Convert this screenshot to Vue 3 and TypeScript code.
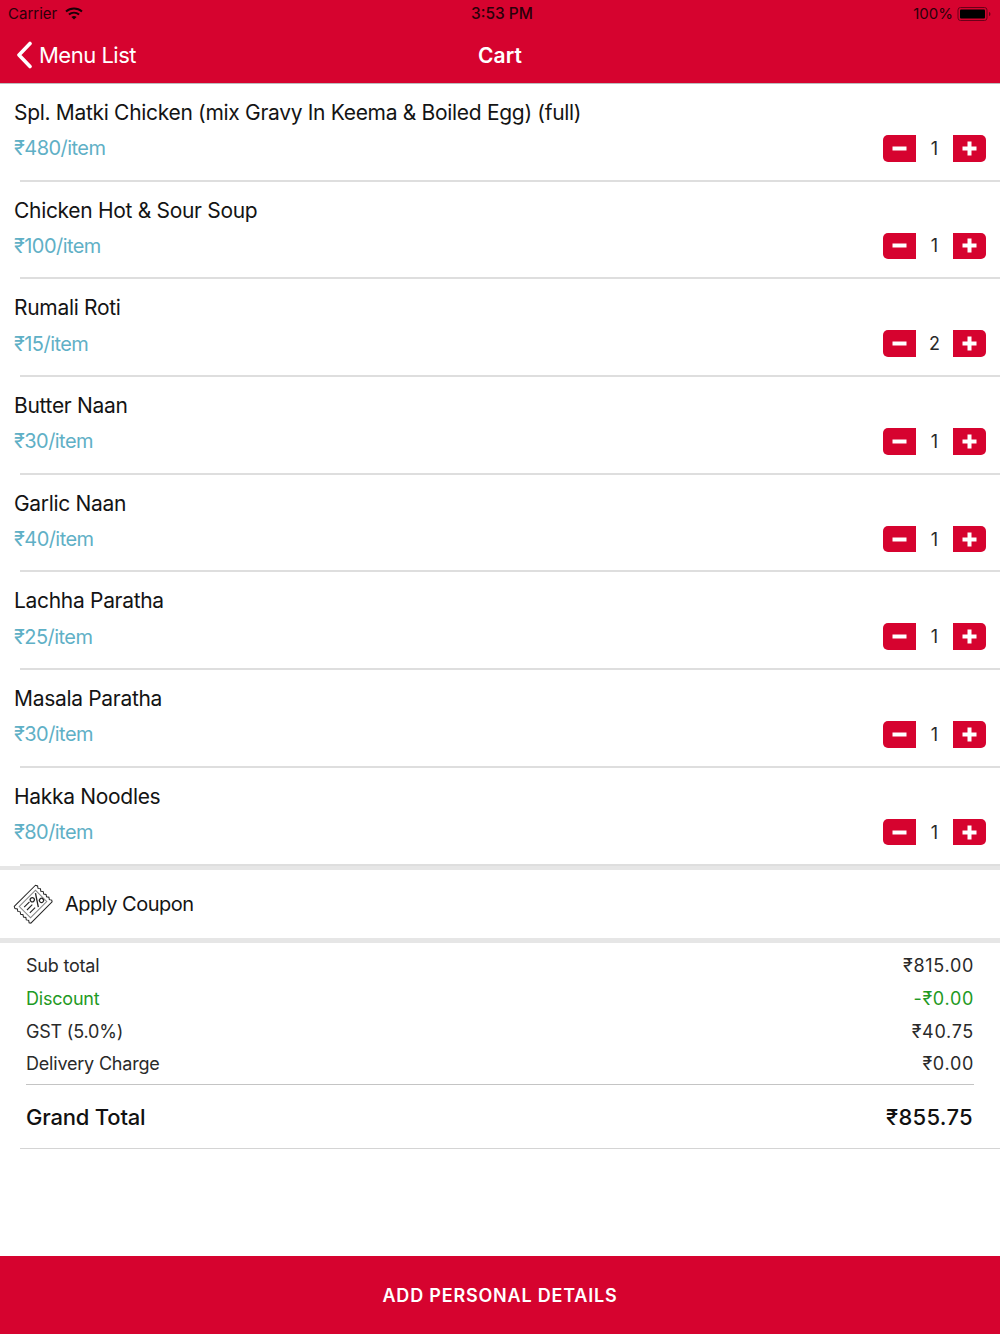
<script setup lang="ts">
interface Item { name: string; price: number; qty: number }
const items: Item[] = [
  { name: 'Spl. Matki Chicken (mix Gravy In Keema & Boiled Egg) (full)', price: 480, qty: 1 },
  { name: 'Chicken Hot & Sour Soup', price: 100, qty: 1 },
  { name: 'Rumali Roti', price: 15, qty: 2 },
  { name: 'Butter Naan', price: 30, qty: 1 },
  { name: 'Garlic Naan', price: 40, qty: 1 },
  { name: 'Lachha Paratha', price: 25, qty: 1 },
  { name: 'Masala Paratha', price: 30, qty: 1 },
  { name: 'Hakka Noodles', price: 80, qty: 1 },
]
const totals = [
  { label: 'Sub total', value: '₹815.00', green: false },
  { label: 'Discount', value: '-₹0.00', green: true },
  { label: 'GST (5.0%)', value: '₹40.75', green: false },
  { label: 'Delivery Charge', value: '₹0.00', green: false },
]
</script>

<template>
  <div class="page">
    <header class="header">
      <div class="status">
        <div class="status-left">
          <span>Carrier</span>
          <svg width="18" height="13" viewBox="0 0 18 13" class="wifi">
            <path d="M1 4.600C5.600 .6 12.400 .6 17 4.600" fill="none" stroke="#1a0006" stroke-width="2" />
            <path d="M3.900 7.600C6.900 5 11.100 5 14.100 7.600" fill="none" stroke="#1a0006" stroke-width="2" />
            <path d="M6.400 9.900C8 8.600 10 8.600 11.600 9.900L9 12.600Z" fill="#1a0006" />
          </svg>
        </div>
        <span class="clock">3:53 PM</span>
        <div class="status-right">
          <span>100%</span>
          <svg width="36" height="16" viewBox="0 0 36 16" class="battery">
            <rect x="1" y="1.500" width="29" height="13" rx="2.500" fill="none" stroke="#6b0018" stroke-width="1" />
            <rect x="3" y="3.500" width="25" height="9" rx="1" fill="#000" />
            <path d="M32 6v4c1 0 1.400-1 1.400-2s-.4-2-1.400-2z" fill="#6b0018" />
          </svg>
        </div>
      </div>
      <div class="nav">
        <div class="back">
          <svg width="18" height="28" viewBox="0 0 18 28">
            <path d="M15 2.500 4 14l11 11.500" fill="none" stroke="#fff" stroke-width="3.600" stroke-linecap="round" stroke-linejoin="round" />
          </svg>
          <span>Menu List</span>
        </div>
        <div class="title">Cart</div>
      </div>
    </header>

    <section class="list">
      <div v-for="item in items" :key="item.name" class="row">
        <div class="row-body">
          <div class="name">{{ item.name }}</div>
          <div class="row-bottom">
            <span class="price">₹{{ item.price }}/item</span>
            <div class="stepper">
              <button class="step minus"><svg width="15" height="15" viewBox="0 0 15 15"><rect x="0.500" y="5.500" width="14" height="4" fill="#fff" /></svg></button>
              <span class="qty">{{ item.qty }}</span>
              <button class="step plus"><svg width="15" height="15" viewBox="0 0 15 15"><path d="M5.500.5h4v5h5v4h-5v5h-4v-5h-5v-4h5z" fill="#fff" /></svg></button>
            </div>
          </div>
        </div>
        <div class="divider"></div>
      </div>
    </section>

    <section class="coupon">
      <svg width="40" height="40" viewBox="0 0 40 40" class="coupon-icon">
        <g transform="rotate(-45 20 20)" fill="none" stroke="#222" stroke-width="1">
          <path d="M5 8.500H35l1 2-1.400 2 1.400 2-1.400 2 1.400 2-1.400 2 1.400 2-1.400 2 1.400 2-1.400 2 1.400 2-1 1.500H5l-1-1.500 1.400-2-1.400-2 1.400-2-1.400-2 1.400-2-1.400-2 1.400-2-1.400-2 1.400-2-1.400-2z" />
          <path d="M8.500 12h23v16h-23z" stroke-opacity="0.55" />
          <path d="M11.500 16h7.500M11.500 20h7.500M11.500 24h7.500" stroke-width="1.100" />
          <path d="M21.500 26l8-12" stroke-width="1.300" />
          <circle cx="22.500" cy="16.500" r="2.100" stroke-width="1.200" />
          <circle cx="28.500" cy="23.500" r="2.100" stroke-width="1.200" />
        </g>
      </svg>
      <span>Apply Coupon</span>
    </section>

    <section class="summary">
      <div class="lines">
        <div v-for="t in totals" :key="t.label" class="line" :class="{ green: t.green }">
          <span>{{ t.label }}</span>
          <span class="amount">{{ t.value }}</span>
        </div>
      </div>
      <div class="grand">
        <span>Grand Total</span>
        <span class="grand-amount">₹855.75</span>
      </div>
    </section>

    <footer class="cta">ADD PERSONAL DETAILS</footer>
  </div>
</template>

<style>
html, body { margin: 0; background: #fff; }
</style>

<style scoped>
.page {
  width: 1000px;
  height: 1334px;
  display: flex;
  flex-direction: column;
  background: #fff;
  font-family: Inter, "Noto Sans", sans-serif;
  color: #1b1b1b;
  overflow: hidden;
}
.header {
  height: 83px;
  background: #d6032f;
  border-bottom: 1px solid #bdbdbd;
  flex: none;
}
.status {
  height: 27px;
  padding: 0 7px 0 8px;
  display: flex;
  align-items: center;
  justify-content: space-between;
  position: relative;
  font-size: 15px;
  color: #2a0009;
}
.status-left, .status-right { display: flex; align-items: center; gap: 8px; }
.status-right { gap: 4px; }
.clock {
  position: absolute;
  left: 0;
  right: 0;
  text-align: center;
  font-size: 15.500px;
  font-weight: 500;
  padding-left: 4px;
}
.nav {
  height: 56px;
  position: relative;
  display: flex;
  align-items: center;
  justify-content: center;
  color: #fff;
}
.back {
  position: absolute;
  left: 15px;
  top: 0;
  height: 56px;
  display: flex;
  align-items: center;
  gap: 6px;
  font-size: 22px;
  letter-spacing: -0.5px;
}
.title { font-size: 21px; font-weight: 600; letter-spacing: 0.1px; }
.list { flex: none; }
.row {
  height: 97.700px;
  display: flex;
  flex-direction: column;
}
.row-body { flex: 1; padding: 15px 14px 0; }
.divider { height: 2px; margin-left: 20px; background: #dedede; flex: none; }
.name { font-size: 21px; line-height: 28px; color: #141414; letter-spacing: -0.31px; }
.row-bottom {
  margin-top: 8px;
  display: flex;
  align-items: center;
  justify-content: space-between;
  height: 26.500px;
}
.price { font-size: 20px; color: #5fb0c6; letter-spacing: -0.55px; }
.stepper { display: flex; align-items: center; }
.step {
  width: 33px;
  height: 26.500px;
  border: 0;
  padding: 0;
  background: #d6032f;
  display: flex;
  align-items: center;
  justify-content: center;
}
.minus { border-radius: 5px 0 0 5px; }
.plus { border-radius: 0 5px 5px 0; }
.qty { width: 37px; text-align: center; font-size: 18px; color: #2a2a2a; }
.coupon {
  height: 68px;
  flex: none;
  display: flex;
  align-items: center;
  gap: 12px;
  padding-left: 13px;
  font-size: 20px;
  letter-spacing: -0.5px;
  color: #141414;
  border-top: 4px solid #e6e6e6;
  border-bottom: 5px solid #e6e6e6;
}
.summary { flex: 1; padding-top: 7px; }
.lines {
  margin: 0 26px;
  padding-bottom: 4px;
  border-bottom: 1px solid #c4c4c4;
}
.line {
  height: 32.700px;
  display: flex;
  align-items: center;
  justify-content: space-between;
  font-size: 18px;
  letter-spacing: -0.2px;
  color: #2a2a2a;
}
.amount { letter-spacing: 0.7px; }
.green { color: #1f9a24; }
.grand {
  height: 63px;
  margin-left: 20px;
  padding: 0 27px 0 6px;
  display: flex;
  align-items: center;
  justify-content: space-between;
  font-size: 22px;
  font-weight: 500;
  color: #111;
  letter-spacing: -0.2px;
  border-bottom: 1px solid #d4d4d4;
}
.grand-amount { letter-spacing: 0.3px; }
.cta {
  height: 78px;
  flex: none;
  background: #d6032f;
  color: #fff;
  display: flex;
  align-items: center;
  justify-content: center;
  font-size: 18px;
  font-weight: 600;
  letter-spacing: 0.8px;
}
</style>
